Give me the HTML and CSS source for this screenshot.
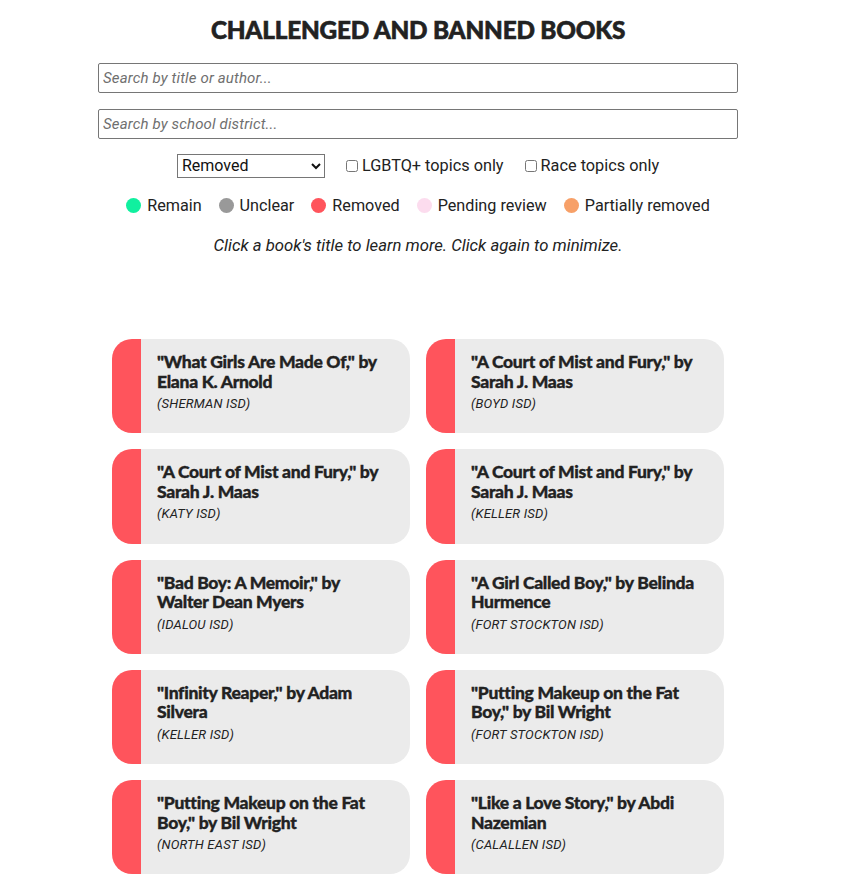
FILE: index.html
```html
<!DOCTYPE html>
<html lang="en">
<head>
<meta charset="utf-8">
<title>Challenged and Banned Books</title>
<link rel="stylesheet" href="styles.css">
</head>
<body>
<div class="page">
  <h1 class="title">CHALLENGED AND BANNED BOOKS</h1>
  <div class="searches">
    <input class="search" type="text" placeholder="Search by title or author...">
    <input class="search" type="text" placeholder="Search by school district...">
  </div>
  <div class="filters">
    <select class="status-select">
      <option>Removed</option>
    </select>
    <label class="check"><input type="checkbox">LGBTQ+ topics only</label>
    <label class="check"><input type="checkbox">Race topics only</label>
  </div>
  <div class="legend">
    <span class="legend-item"><span class="dot dot-remain"></span>Remain</span>
    <span class="legend-item"><span class="dot dot-unclear"></span>Unclear</span>
    <span class="legend-item"><span class="dot dot-removed"></span>Removed</span>
    <span class="legend-item"><span class="dot dot-pending"></span>Pending review</span>
    <span class="legend-item"><span class="dot dot-partial"></span>Partially removed</span>
  </div>
  <p class="hint">Click a book's title to learn more. Click again to minimize.</p>
  <div class="cards">
    <div class="card"><div class="card-title">"What Girls Are Made Of," by Elana K. Arnold</div><div class="card-district">(SHERMAN ISD)</div></div>
    <div class="card"><div class="card-title">"A Court of Mist and Fury," by Sarah J. Maas</div><div class="card-district">(BOYD ISD)</div></div>
    <div class="card"><div class="card-title">"A Court of Mist and Fury," by Sarah J. Maas</div><div class="card-district">(KATY ISD)</div></div>
    <div class="card"><div class="card-title">"A Court of Mist and Fury," by Sarah J. Maas</div><div class="card-district">(KELLER ISD)</div></div>
    <div class="card"><div class="card-title">"Bad Boy: A Memoir," by Walter Dean Myers</div><div class="card-district">(IDALOU ISD)</div></div>
    <div class="card"><div class="card-title">"A Girl Called Boy," by Belinda Hurmence</div><div class="card-district">(FORT STOCKTON ISD)</div></div>
    <div class="card"><div class="card-title">"Infinity Reaper," by Adam Silvera</div><div class="card-district">(KELLER ISD)</div></div>
    <div class="card"><div class="card-title">"Putting Makeup on the Fat Boy," by Bil Wright</div><div class="card-district">(FORT STOCKTON ISD)</div></div>
    <div class="card"><div class="card-title">"Putting Makeup on the Fat Boy," by Bil Wright</div><div class="card-district">(NORTH EAST ISD)</div></div>
    <div class="card"><div class="card-title">"Like a Love Story," by Abdi Nazemian</div><div class="card-district">(CALALLEN ISD)</div></div>
  </div>
</div>
</body>
</html>
```

FILE: styles.css
```css
html, body {
  margin: 0;
  padding: 0;
  background: #fff;
}

body {
  font-family: Roboto, "Liberation Sans", sans-serif;
  color: #222;
}

.page {
  width: 836px;
  display: flex;
  flex-direction: column;
  align-items: center;
}

.title {
  margin: 16px 0 0;
  font-family: Lato, Roboto, sans-serif;
  font-weight: 900;
  font-size: 24.3px;
  line-height: 28px;
  letter-spacing: -0.2px;
  color: #222;
  -webkit-text-stroke: 0.6px #222;
}

.searches {
  margin-top: 19px;
  width: 640px;
  display: flex;
  flex-direction: column;
  gap: 16px;
}

.search {
  box-sizing: border-box;
  width: 640px;
  height: 30px;
  margin: 0;
  padding: 0 4px;
  border: 1px solid #767676;
  border-radius: 2px;
  font-family: Roboto, sans-serif;
  font-size: 15px;
  font-style: italic;
  letter-spacing: 0.15px;
  color: #222;
  background: #fff;
}

.search::placeholder {
  color: #6f6f6f;
  font-style: italic;
}

.filters {
  margin-top: 15px;
  display: flex;
  align-items: center;
  gap: 21px;
  font-size: 16.3px;
}

.status-select {
  width: 148px;
  height: 24px;
  margin: 0;
  padding: 0 0 2px;
  font-family: Roboto, sans-serif;
  font-size: 16px;
  color: #111;
  border: 1px solid #767676;
  border-radius: 0;
  background: #fff;
}

.check {
  display: flex;
  align-items: center;
  line-height: 20px;
}

.check input {
  margin: 0 4px 0 0;
  width: 12px;
  height: 12px;
}

.legend {
  margin-top: 18px;
  display: flex;
  align-items: center;
  gap: 17px;
  font-size: 16.2px;
}

.legend-item {
  display: flex;
  align-items: center;
  gap: 6px;
}

.dot {
  width: 15px;
  height: 15px;
  border-radius: 50%;
  display: inline-block;
}

.dot-remain { background: #10f09f; }
.dot-unclear { background: #999999; }
.dot-partial { background: #f7a068; }
.dot-removed { background: #ff545c; }
.dot-pending { background: #fcdcee; }

.hint {
  margin: 21px 0 0;
  font-size: 16.7px;
  font-style: italic;
  color: #222;
}

.cards {
  margin-top: 84px;
  display: grid;
  grid-template-columns: 298px 298px;
  column-gap: 16px;
  row-gap: 16px;
}

.card {
  box-sizing: border-box;
  height: 94.3px;
  background: #ebebeb;
  border-left: 29px solid #ff545c;
  border-radius: 20px;
  padding: 13px 20px 0 16px;
}

.card-title {
  font-family: Lato, Roboto, sans-serif;
  font-weight: 900;
  font-size: 17.5px;
  line-height: 19.5px;
  letter-spacing: -0.3px;
  color: #222;
  -webkit-text-stroke: 0.35px #222;
}

.card-district {
  margin-top: 5px;
  font-size: 13px;
  font-style: italic;
  letter-spacing: 0.2px;
  color: #222;
}
```
